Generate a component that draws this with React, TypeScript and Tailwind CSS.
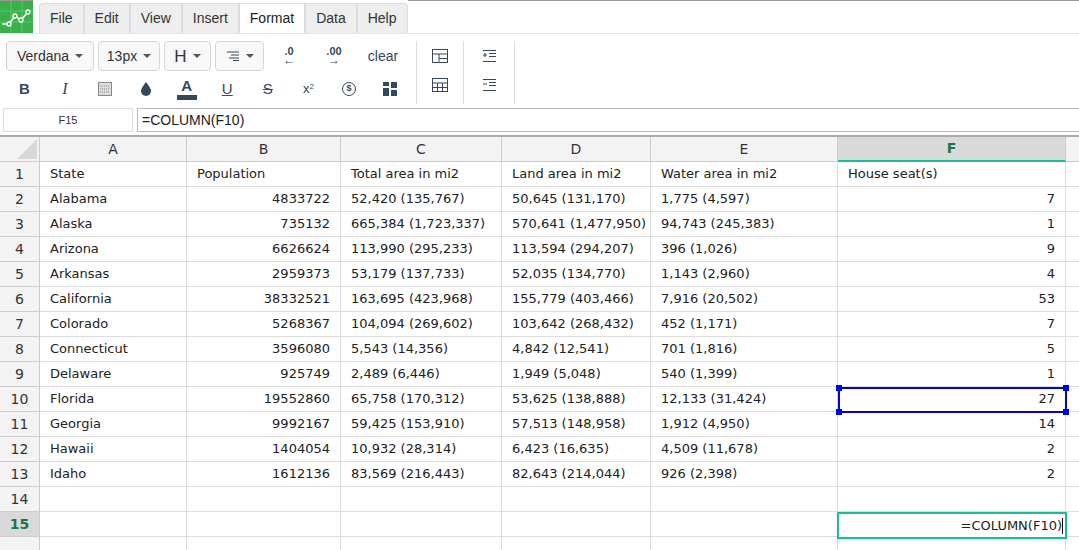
import React from "react";

const rows: string[][] = [
  ["State", "Population", "Total area in mi2", "Land area in mi2", "Water area in mi2", "House seat(s)"],
  ["Alabama", "4833722", "52,420 (135,767)", "50,645 (131,170)", "1,775 (4,597)", "7"],
  ["Alaska", "735132", "665,384 (1,723,337)", "570,641 (1,477,950)", "94,743 (245,383)", "1"],
  ["Arizona", "6626624", "113,990 (295,233)", "113,594 (294,207)", "396 (1,026)", "9"],
  ["Arkansas", "2959373", "53,179 (137,733)", "52,035 (134,770)", "1,143 (2,960)", "4"],
  ["California", "38332521", "163,695 (423,968)", "155,779 (403,466)", "7,916 (20,502)", "53"],
  ["Colorado", "5268367", "104,094 (269,602)", "103,642 (268,432)", "452 (1,171)", "7"],
  ["Connecticut", "3596080", "5,543 (14,356)", "4,842 (12,541)", "701 (1,816)", "5"],
  ["Delaware", "925749", "2,489 (6,446)", "1,949 (5,048)", "540 (1,399)", "1"],
  ["Florida", "19552860", "65,758 (170,312)", "53,625 (138,888)", "12,133 (31,424)", "27"],
  ["Georgia", "9992167", "59,425 (153,910)", "57,513 (148,958)", "1,912 (4,950)", "14"],
  ["Hawaii", "1404054", "10,932 (28,314)", "6,423 (16,635)", "4,509 (11,678)", "2"],
  ["Idaho", "1612136", "83,569 (216,443)", "82,643 (214,044)", "926 (2,398)", "2"],
  ["", "", "", "", "", ""],
  ["", "", "", "", "", ""],
  ["", "", "", "", "", ""],
];

const gridCols = "grid grid-cols-[40px_147px_154px_161px_149px_187px_228px_1fr]";

function Btn({ children }: { children: React.ReactNode }) {
  return <div className="w-[41px] h-[28px] flex items-center justify-center text-[#34495e]">{children}</div>;
}

function Drop({ children, w }: { children: React.ReactNode; w: string }) {
  return (
    <div className={`${w} h-[30px] border border-[#d5d5d5] rounded bg-[#f8f8f8] flex items-center justify-center gap-1.5 text-[14px] text-[#333]`}>
      {children}
      <span className="w-0 h-0 border-l-4 border-r-4 border-t-4 border-l-transparent border-r-transparent border-t-[#555]" />
    </div>
  );
}

export default function App() {
  return (
    <div className="w-[1079px] h-[550px] overflow-hidden bg-white" style={{ fontFamily: "'Liberation Sans', Arial, sans-serif" }}>
      {/* tabs */}
      <div className="h-[33px] flex items-end bg-white border-t border-[#999]">
        <div className="w-[33px] h-[32px] bg-[#3ab04a] self-start relative">
          <svg viewBox="0 0 33 32" className="w-[33px] h-[32px]">
            <path d="M0 10H33M0 21H33M11 0V32M22 0V32" stroke="#5cc76a" strokeWidth="1" />
            <polyline points="2,23 9,23 15,15 21,19 28,11" fill="none" stroke="#fff" strokeWidth="1.6" />
            {[[9,23],[15,15],[21,19],[28,11]].map(([x,y],i)=><circle key={i} cx={x} cy={y} r="2" fill="#3ab04a" stroke="#fff" strokeWidth="1.3" />)}
          </svg>
        </div>
        <div className="flex items-end h-[33px] pt-[3px] pl-[6px] bg-white">
          {["File", "Edit", "View", "Insert", "Format", "Data", "Help"].map((t) => (
            <div key={t} className={`h-[30px] px-[10px] flex items-center text-[14px] border border-b-0 ${t === "Format" ? "bg-white border-[#ddd] text-[#222]" : "bg-[#eee] border-[#ddd] text-[#333]"} ${t==="File"?"rounded-tl":""} ${t==="Help"?"rounded-tr":""}`}>{t}</div>
          ))}
        </div>
        <div className="flex-1 border-b border-white" />
      </div>
      {/* toolbar */}
      <div className="h-[72px] flex border-t border-[#e5e5e5] pl-[6px] pt-[7px]">
        <div className="flex flex-col gap-[4px] w-[404px]">
          <div className="flex items-center gap-[4px]">
            <Drop w="w-[88px]">Verdana</Drop>
            <Drop w="w-[62px]">13px</Drop>
            <Drop w="w-[47px]"><span className="text-[17px] leading-none">H</span></Drop>
            <Drop w="w-[49px]"><svg viewBox="0 0 14 10" className="w-[14px] h-[10px]"><path d="M1 1H13M5 4H13M3 7H13M7 9.5H13" stroke="#34495e" /></svg></Drop>
            <div className="w-[42px] text-center text-[11px] font-bold text-[#34495e] leading-[9px]">.0<br/><span className="text-[12px]">←</span></div>
            <div className="w-[40px] text-center text-[11px] font-bold text-[#34495e] leading-[9px]">.00<br/><span className="text-[12px]">→</span></div>
            <div className="w-[50px] text-center text-[14px] text-[#34495e]">clear</div>
          </div>
          <div className="flex items-center -ml-[2px]">
            <Btn><span className="font-bold text-[15px]">B</span></Btn>
            <Btn><span className="italic text-[16px]" style={{ fontFamily: "'Liberation Serif', serif" }}>I</span></Btn>
            <Btn><svg viewBox="0 0 14 14" className="w-[14px] h-[14px]"><rect x="0.5" y="0.5" width="13" height="13" fill="#ddd" stroke="#888" /><path d="M2 4H12M2 7H12M2 10H12" stroke="#888" strokeDasharray="1 1" /></svg></Btn>
            <Btn><svg viewBox="0 0 12 14" className="w-[12px] h-[14px]"><path d="M6 0C6 0 1 6 1 9a5 5 0 0010 0C11 6 6 0 6 0z" fill="#34495e" /></svg></Btn>
            <Btn><div className="flex flex-col items-center"><span className="text-[15px] leading-[15px] font-bold">A</span><span className="w-[20px] h-[5px] bg-[#34495e] mt-[2px]" /></div></Btn>
            <Btn><span className="underline text-[15px]">U</span></Btn>
            <Btn><span className="line-through text-[15px]">S</span></Btn>
            <Btn><span className="text-[13px]">x<sup className="text-[8px]">2</sup></span></Btn>
            <Btn><span className="w-[14px] h-[14px] rounded-full border-[1.5px] border-[#34495e] text-[9px] font-bold flex items-center justify-center">$</span></Btn>
            <Btn><svg viewBox="0 0 14 14" className="w-[14px] h-[14px]"><rect x="0" y="0" width="6" height="4" fill="#34495e"/><rect x="8" y="0" width="6" height="6" fill="#34495e"/><rect x="0" y="6" width="6" height="8" fill="#34495e"/><rect x="8" y="8" width="6" height="6" fill="#34495e"/></svg></Btn>
          </div>
        </div>
        <div className="w-px bg-[#ddd] ml-[6px] h-[63px]" />
        <div className="w-[46px] flex flex-col items-center gap-[15px] pt-[8px]">
          <svg viewBox="0 0 16 14" className="w-[16px] h-[14px]"><rect x="0.5" y="0.5" width="15" height="13" fill="none" stroke="#34495e"/><path d="M0 5H16M7 5V14M7 9.5H16" stroke="#34495e"/></svg>
          <svg viewBox="0 0 16 14" className="w-[16px] h-[14px]"><rect x="0.5" y="0.5" width="15" height="13" fill="none" stroke="#34495e"/><path d="M0 5H16M0 9.5H16M5.5 5V14M10.5 5V14" stroke="#34495e"/></svg>
        </div>
        <div className="w-px bg-[#ddd] h-[63px]" />
        <div className="w-[50px] flex flex-col items-center gap-[17px] pt-[9px]">
          <svg viewBox="0 0 13 12" className="w-[13px] h-[12px]"><path d="M0 0.5H13M6 3.5H13M6 6.5H13M0 11.5H13M0 5H4M2 3V7" stroke="#34495e"/></svg>
          <svg viewBox="0 0 13 12" className="w-[13px] h-[12px]"><path d="M0 0.5H13M6 3.5H13M6 6.5H13M0 11.5H13M0 5H4" stroke="#34495e"/></svg>
        </div>
        <div className="w-px bg-[#ddd] h-[63px]" />
      </div>
      {/* formula bar */}
      <div className="h-[28px] flex items-center gap-[4px] pl-[3px] pt-[3px] pb-[1px]">
        <div className="w-[130px] h-[24px] border border-[#ddd] flex items-center justify-center text-[11px] text-[#333]">F15</div>
        <div className="flex-1 h-[24px] border border-[#bbb] border-r-0 flex items-center pl-[4px] text-[14px] text-[#222]">=COLUMN(F10)</div>
      </div>
      {/* grid */}
      <div className="border-t-2 border-[#aaa] mt-[2px] relative" style={{ fontFamily: "Verdana, 'DejaVu Sans', sans-serif" }}>
        <div className={`${gridCols} h-[25px] bg-[#f3f3f3] text-[14px] text-[#333]`}>
          <div className="border-r border-b border-[#ccc] relative overflow-hidden">
            <svg viewBox="0 0 20 20" className="absolute right-[2px] bottom-[2px] w-[20px] h-[20px]"><polygon points="20,0 20,20 0,20" fill="#d8d8d8" /></svg>
          </div>
          {["A", "B", "C", "D", "E"].map((c) => (
            <div key={c} className="border-r border-b border-[#ccc] flex items-center justify-center">{c}</div>
          ))}
          <div className="border-r border-b-2 border-b-[#1abc9c] border-r-[#ccc] bg-[#d9d9d9] flex items-center justify-center font-bold text-[#217346]">F</div>
          <div className="border-b border-[#ccc]" />
        </div>
        {rows.map((r, i) => (
          <div key={i} className={`${gridCols} h-[25px] text-[13px] text-[#222]`}>
            <div className={`border-r border-b border-[#ccc] flex items-center justify-center text-[14px] ${i === 14 ? "bg-[#d9d9d9] font-bold text-[#217346]" : "bg-[#f3f3f3] text-[#333]"}`}>{i === 15 ? "" : i + 1}</div>
            {r.map((v, j) => {
              const right = i > 0 && (j === 1 || j === 5);
              return (
                <div key={j} className={`border-r border-b border-[#ddd] flex items-center whitespace-nowrap overflow-hidden ${right ? "justify-end pr-[10px]" : "pl-[10px]"}`}>{v}</div>
              );
            })}
            <div className="border-b border-[#ddd]" />
          </div>
        ))}
        {/* selections */}
        <div className="absolute left-[838px] top-[250px] w-[229px] h-[26px] border-2 border-[#0000ee]">
          {["-left-[4px] -top-[4px]", "-right-[4px] -top-[4px]", "-left-[4px] -bottom-[4px]", "-right-[4px] -bottom-[4px]"].map((p) => (
            <div key={p} className={`absolute ${p} w-[6px] h-[6px] bg-[#0000ee]`} />
          ))}
        </div>
        <div className="absolute left-[837px] top-[375px] w-[230px] h-[27px] border-2 border-[#1abc9c] bg-white flex items-center justify-end pr-[2px] text-[13px] text-[#222] shadow">
          =COLUMN(F10)<span className="w-px h-[16px] bg-black" />
        </div>
      </div>
    </div>
  );
}
